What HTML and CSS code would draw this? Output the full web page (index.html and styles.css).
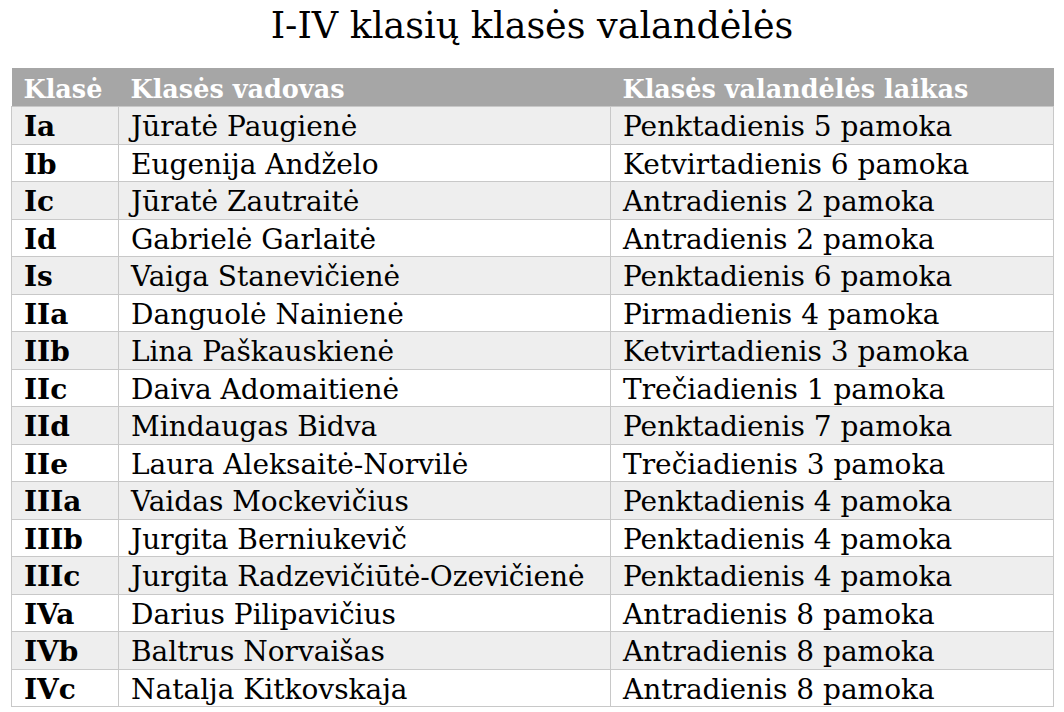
FILE: index.html
```html
<!DOCTYPE html>
<html lang="lt">
<head>
<meta charset="utf-8">
<title>I-IV klasių klasės valandėlės</title>
<link rel="stylesheet" href="styles.css">
</head>
<body>
<h1 class="title">I-IV klasių klasės valandėlės</h1>
<table class="schedule">
  <colgroup>
    <col class="c1"><col class="c2"><col class="c3">
  </colgroup>
  <thead>
    <tr><th>Klasė</th><th>Klasės vadovas</th><th>Klasės valandėlės laikas</th></tr>
  </thead>
  <tbody>
    <tr><td class="cls">Ia</td><td>Jūratė Paugienė</td><td>Penktadienis 5 pamoka</td></tr>
    <tr><td class="cls">Ib</td><td>Eugenija Andželo</td><td>Ketvirtadienis 6 pamoka</td></tr>
    <tr><td class="cls">Ic</td><td>Jūratė Zautraitė</td><td>Antradienis 2 pamoka</td></tr>
    <tr><td class="cls">Id</td><td>Gabrielė Garlaitė</td><td>Antradienis 2 pamoka</td></tr>
    <tr><td class="cls">Is</td><td>Vaiga Stanevičienė</td><td>Penktadienis 6 pamoka</td></tr>
    <tr><td class="cls">IIa</td><td>Danguolė Nainienė</td><td>Pirmadienis 4 pamoka</td></tr>
    <tr><td class="cls">IIb</td><td>Lina Paškauskienė</td><td>Ketvirtadienis 3 pamoka</td></tr>
    <tr><td class="cls">IIc</td><td>Daiva Adomaitienė</td><td>Trečiadienis 1 pamoka</td></tr>
    <tr><td class="cls">IId</td><td>Mindaugas Bidva</td><td>Penktadienis 7 pamoka</td></tr>
    <tr><td class="cls">IIe</td><td>Laura Aleksaitė-Norvilė</td><td>Trečiadienis 3 pamoka</td></tr>
    <tr><td class="cls">IIIa</td><td>Vaidas Mockevičius</td><td>Penktadienis 4 pamoka</td></tr>
    <tr><td class="cls">IIIb</td><td>Jurgita Berniukevič</td><td>Penktadienis 4 pamoka</td></tr>
    <tr><td class="cls">IIIc</td><td>Jurgita Radzevičiūtė-Ozevičienė</td><td>Penktadienis 4 pamoka</td></tr>
    <tr><td class="cls">IVa</td><td>Darius Pilipavičius</td><td>Antradienis 8 pamoka</td></tr>
    <tr><td class="cls">IVb</td><td>Baltrus Norvaišas</td><td>Antradienis 8 pamoka</td></tr>
    <tr><td class="cls">IVc</td><td>Natalja Kitkovskaja</td><td>Antradienis 8 pamoka</td></tr>
  </tbody>
</table>
</body>
</html>
```
FILE: styles.css
```css
html, body {
  margin: 0;
  padding: 0;
  background: #ffffff;
}
body {
  font-family: "DejaVu Serif", "Liberation Serif", serif;
  color: #000000;
}
.title {
  margin: 0;
  padding-top: 4px;
  height: 68px;
  box-sizing: border-box;
  text-align: center;
  font-weight: normal;
  font-size: 36.5px;
  line-height: 44px;
}
.schedule {
  margin-left: 11px;
  width: 1042px;
  table-layout: fixed;
  border-collapse: collapse;
  font-size: 28px;
}
.c1 { width: 107px; }
.c2 { width: 492px; }
.c3 { width: 443px; }
.schedule th {
  background: #a6a6a6;
  color: #ffffff;
  font-weight: bold;
  font-size: 25.5px;
  text-align: left;
  height: 34px;
  padding: 4px 0 0 12px;
  line-height: 34px;
  white-space: nowrap;
  overflow: hidden;
}
.schedule td {
  height: 33.5px;
  padding: 3px 0 0 12px;
  line-height: 33px;
  border: 1px solid #c8c8c8;
  white-space: nowrap;
  overflow: hidden;
}
.schedule tbody tr:nth-child(odd) td {
  background: #eeeeee;
}
.schedule td.cls {
  font-weight: bold;
}
```
